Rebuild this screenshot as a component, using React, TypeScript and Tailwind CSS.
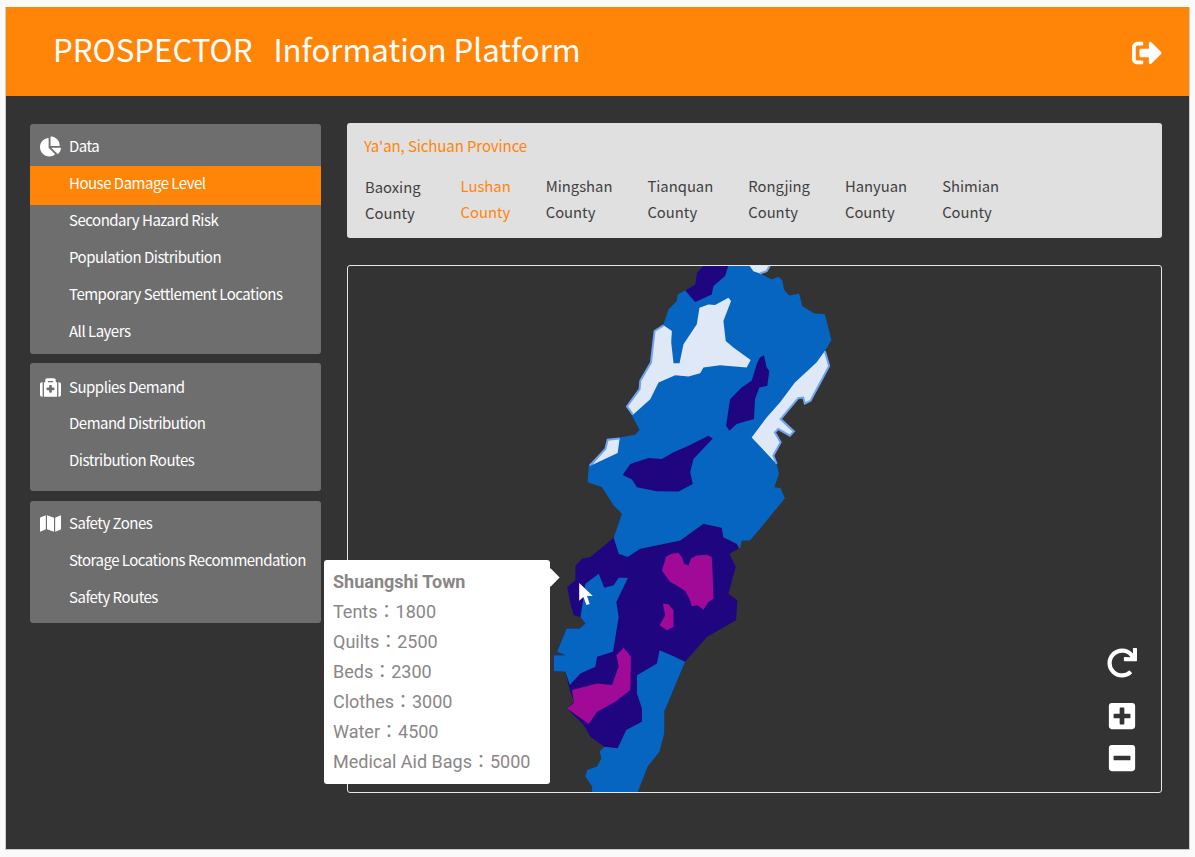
import React from 'react';
import { FaChartPie, FaMedkit, FaMap, FaSignOutAlt, FaRedo, FaPlusSquare, FaMinusSquare } from 'react-icons/fa';

const groups = [
  {
    title: 'Data',
    icon: <FaChartPie className="text-[21px]" />,
    className: 'h-[230px]',
    headerClassName: 'h-[42px] pt-[2px]',
    items: ['House Damage Level', 'Secondary Hazard Risk', 'Population Distribution', 'Temporary Settlement Locations', 'All Layers'],
  },
  {
    title: 'Supplies Demand',
    icon: <FaMedkit className="text-[21px]" />,
    className: 'h-[128px]',
    headerClassName: 'h-[43px] pt-[5px]',
    items: ['Demand Distribution', 'Distribution Routes'],
  },
  {
    title: 'Safety Zones',
    icon: <FaMap className="text-[21px]" />,
    className: 'h-[122px] mt-px',
    headerClassName: 'h-[42px] pt-[2px]',
    items: ['Storage Locations Recommendation', 'Safety Routes'],
  },
];

const counties = ['Baoxing', 'Lushan', 'Mingshan', 'Tianquan', 'Rongjing', 'Hanyuan', 'Shimian'];

const stats = [
  ['Tents', '1800'],
  ['Quilts', '2500'],
  ['Beds', '2300'],
  ['Clothes', '3000'],
  ['Water', '4500'],
  ['Medical Aid Bags', '5000'],
];

function Sidebar() {
  return (
    <div className="w-[291px] flex flex-col gap-[9px] pt-[28px]">
      {groups.map((g) => (
        <div key={g.title} className={`${g.className} bg-[#6e6e6e] rounded-[3px] text-white text-[15px] tracking-[-0.5px] overflow-hidden`}>
          <div className={`${g.headerClassName} flex items-center pl-[10px]`}>
            <span className="w-[29px] flex items-center">{g.icon}</span>
            <span>{g.title}</span>
          </div>
          {g.items.map((item) =>
            item === 'House Damage Level' ? (
              <div key={item} className="h-[39px] mb-[-2px] flex items-center pl-[39px] pb-[4px] bg-[#ff8509]">
                {item}
              </div>
            ) : (
              <div key={item} className="h-[37px] flex items-center pl-[39px] pb-[2px]">
                {item}
              </div>
            )
          )}
        </div>
      ))}
    </div>
  );
}

function CountyBar() {
  return (
    <div className="h-[115px] bg-[#e0e0e0] rounded-[3px] pl-[17px] pt-[12px] text-[15px]">
      <div className="text-[#ff8509] leading-[22px] tracking-[-0.1px]">Ya'an, Sichuan Province</div>
      <div className="flex gap-[35px] mt-[16px] pl-px text-[14.8px]">
        {counties.map((c, i) => (
          <div key={c} className={`leading-[26px] ${c === 'Lushan' ? 'text-[#ff8509]' : 'text-[#404040]'} ${i === 0 ? 'mr-[5px] mt-px' : ''}`}>
            <div>{c}</div>
            <div>County</div>
          </div>
        ))}
      </div>
    </div>
  );
}

// Outlines traced from the map: first group is the south half, second the north half
function CountyMap() {
  return (
    <svg viewBox="347 265 815 527" className="block w-full h-full">
      <g transform="translate(540 520) scale(0.33333)">
        <polygon
          fill="#1f0580"
          points="220,52 150,110 125,115 105,135 105,180 80,200 90,250 100,285 120,290 135,310 118,325 78,325 50,395 75,405 40,405 40,453 75,455 88,510 100,545 80,565 130,615 150,650 192,680 232,685 258,630 305,605 372,575 435,425 500,350 588,300 592,240 565,220 587,140 568,100 595,85 590,70 550,50 545,22 490,10 420,60 300,85"
        />
        <polygon
          fill="#0565c0"
          points="135,190 175,160 192,202 220,195 235,172 263,172 228,245 235,290 218,395 170,410 165,440 120,460 88,495 75,455 40,453 40,405 75,405 50,395 78,325 118,325 135,310 120,290 128,240"
        />
        <polygon
          fill="#0565c0"
          points="358,390 400,408 435,425 372,575 372,640 358,695 322,740 292,818 155,818 155,800 135,770 140,750 170,740 183,715 178,695 192,680 232,685 258,630 305,605 305,565 290,520 290,465 350,430"
        />
        <polygon
          fill="#a00a96"
          points="365,150 378,108 395,100 415,98 425,110 432,130 445,135 452,115 470,105 500,103 515,110 518,170 520,235 505,245 490,268 472,255 455,258 448,235 435,212 412,197 390,185"
        />
        <polygon fill="#a00a96" points="368,250 385,252 400,270 400,320 380,330 358,315 375,285" />
        <polygon
          fill="#a00a96"
          points="228,405 250,383 272,410 270,510 225,545 170,575 145,612 125,598 80,565 100,548 95,510 170,490 215,495 235,440"
        />
      </g>
      <g transform="translate(560 255) scale(0.33333)">
        <polygon
          fill="#0565c0"
          points="430,28 630,28 600,52 635,70 655,62 667,72 672,100 688,118 718,112 727,150 762,172 795,175 815,253 795,285 808,330 752,435 735,443 730,425 715,427 662,490 702,527 690,540 655,520 645,530 662,560 640,600 650,625 657,655 643,695 662,698 675,728 600,820 570,855 545,855 540,880 530,865 490,845 485,817 430,805 360,855 240,880 202,905 175,895 160,847 185,775 160,750 125,695 82,680 85,630 135,580 142,552 178,545 225,537 238,522 200,452 238,400 240,375 272,320 283,225 310,205 325,160 350,135 352,115 375,103 405,85 410,50"
        />
        <polygon
          fill="#dfe8f7"
          points="283,225 310,208 335,225 333,260 340,322 358,322 370,265 410,205 418,155 445,145 465,147 505,125 513,135 490,195 497,255 520,275 572,312 560,335 480,328 430,335 420,352 385,362 345,358 295,380 270,430 218,477 200,452 238,400 240,375 272,320"
        />
        <polygon
          fill="#dfe8f7"
          points="795,285 808,330 752,435 735,443 730,425 715,427 662,490 702,527 690,540 655,520 645,530 662,560 640,600 650,625 575,545 620,485 660,440 705,380 770,320"
        />
        <polygon fill="#dfe8f7" points="142,552 178,548 172,592 95,628 135,580" />
        <polygon fill="#dfe8f7" points="568,28 630,28 620,45 600,52 580,45" />
        <polygon
          fill="#1f0580"
          points="430,28 505,28 495,60 460,90 455,115 405,138 375,103 405,85 410,50"
        />
        <polygon
          fill="#1f0580"
          points="612,298 620,335 628,345 622,390 598,395 585,430 582,490 530,505 508,525 498,510 510,430 545,395 575,375 592,320 600,305"
        />
        <polygon
          fill="#1f0580"
          points="445,540 458,548 400,610 390,650 398,685 355,708 290,707 230,695 215,672 187,658 210,625 265,607 305,610 340,590 385,570"
        />
        <polyline fill="none" stroke="#6ea3f2" strokeWidth="6" points="310,208 283,225 272,320 240,375 238,400 200,452 218,477" />
        <polyline fill="none" stroke="#6ea3f2" strokeWidth="6" points="795,285 808,330 752,435 735,443 730,425 715,427 662,490 702,527 690,540 655,520 645,530 662,560 640,600 650,625" />
        <polyline fill="none" stroke="#6ea3f2" strokeWidth="6" points="178,548 142,552 135,580 88,630" />
        <polyline fill="none" stroke="#6ea3f2" strokeWidth="6" points="630,28 620,45 600,52" />
      </g>
    </svg>
  );
}

function MapPanel() {
  return (
    <div className="relative h-[528px] mt-[27px] border border-[#e8e8e8] rounded-[3px]">
      <CountyMap />

      {/* hover tooltip */}
      <div className="absolute left-[-24px] top-[294px] w-[226px] h-[224px] bg-white rounded-[3px] pl-[9px] pt-[7px] text-[#8a8686] text-[18px] leading-[30px] font-['Roboto','Noto_Sans_CJK_TC',sans-serif]">
        <div className="font-bold">Shuangshi Town</div>
        {stats.map(([label, value]) => (
          <div key={label}>{label}：{value}</div>
        ))}
        <div className="absolute right-[-7px] top-[11px] w-[13px] h-[13px] bg-white rotate-45" />
      </div>

      {/* cursor */}
      <svg viewBox="0 0 13 22" className="absolute left-[231px] top-[317px] w-[14px] h-[23px]">
        <path d="M0 0 L0 17 L4 13.5 L7 21 L10 20 L7.5 12.5 L13 12.5 Z" fill="#fff" />
      </svg>

      <div className="absolute right-[24px] bottom-[19px] flex flex-col items-center text-white">
        <FaRedo className="text-[30px] mb-[23px]" />
        <FaPlusSquare className="text-[30px] mb-[12px]" />
        <FaMinusSquare className="text-[30px]" />
      </div>
    </div>
  );
}

export default function App() {
  return (
    <div className="w-[1195px] h-[857px] bg-[#fafafa] pl-[5px] pt-[7px] font-['Noto_Sans_CJK_SC','Noto_Sans',sans-serif] overflow-hidden">
      <div className="w-[1185px] h-[843px] bg-[#333] border-l border-r border-b border-[#ccc] flex flex-col">
        <div className="h-[89px] bg-[#ff8509] flex items-center justify-between pl-[47px] pr-[27px] text-white shrink-0">
          <div className="text-[31.2px] mb-[4px] flex gap-[21px]">
            <span>PROSPECTOR</span>
            <span>Information Platform</span>
          </div>
          <FaSignOutAlt className="text-[30px] mt-[2px]" />
        </div>
        <div className="flex flex-1 pl-[24px]">
          <Sidebar />
          <div className="w-[815px] ml-[26px] pt-[27px]">
            <CountyBar />
            <MapPanel />
          </div>
        </div>
      </div>
    </div>
  );
}
